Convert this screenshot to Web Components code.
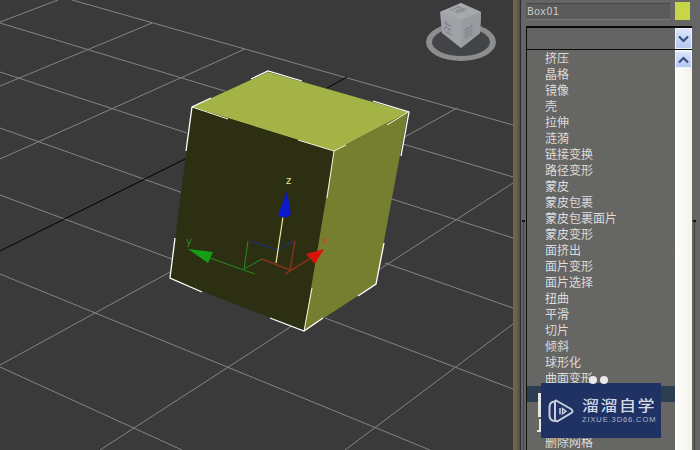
<!DOCTYPE html>
<html lang="zh">
<head>
<meta charset="utf-8">
<title>Box01</title>
<style>
  html, body { margin: 0; height: 100%; background: #3a3a3b; overflow: hidden; }
  body { display: flex; width: 700px; height: 450px; }
</style>
</head>
<body>
<max-viewport></max-viewport>
<command-panel>
  <name-field slot="name" value="Box01" color="#c6d648"></name-field>
  <modifier-list slot="list">
    <mod-item>挤压</mod-item>
    <mod-item>晶格</mod-item>
    <mod-item>镜像</mod-item>
    <mod-item>壳</mod-item>
    <mod-item>拉伸</mod-item>
    <mod-item>涟漪</mod-item>
    <mod-item>链接变换</mod-item>
    <mod-item>路径变形</mod-item>
    <mod-item>蒙皮</mod-item>
    <mod-item>蒙皮包裹</mod-item>
    <mod-item>蒙皮包裹面片</mod-item>
    <mod-item>蒙皮变形</mod-item>
    <mod-item>面挤出</mod-item>
    <mod-item>面片变形</mod-item>
    <mod-item>面片选择</mod-item>
    <mod-item>扭曲</mod-item>
    <mod-item>平滑</mod-item>
    <mod-item>切片</mod-item>
    <mod-item>倾斜</mod-item>
    <mod-item>球形化</mod-item>
    <mod-item>曲面变形</mod-item>
    <mod-item selected></mod-item>
    <mod-item></mod-item>
    <mod-item></mod-item>
    <mod-item>删除网格</mod-item>
  </modifier-list>
</command-panel>
<zixue-badge></zixue-badge>

<script>
// Perspective viewport: grid, box, gizmo and view cube
class MaxViewport extends HTMLElement {
  constructor() {
    super();
    this.attachShadow({ mode: 'open' });
  }

  connectedCallback() {
    // grid lines, measured from the reference
    const grid = [
      [72,0,513,125], [0,23,228,92], [403,144,513,177], [0,72,187,133], [392,199,513,238],
      [0,128,183,193], [385,263,513,308], [0,195,172,259], [325,318,513,389],
      [0,274,430,450], [0,367,182,450],
      [0,22,58,0], [0,86,152,23], [0,159,245,49], [0,365,170,272], [403,138,457,108],
      [100,450,513,183], [345,450,513,324]
    ];
    const gridLines = grid.map(([a, b, c, d]) => `<line x1="${a}" y1="${b}" x2="${c}" y2="${d}"/>`).join('');
    this.shadowRoot.innerHTML = `
      <style>
        :host { display: block; flex: 0 0 513px; height: 450px; background: #3a3a3b; }
        svg { display: block; }
        .grid line { stroke: #848484; stroke-width: 1; }
        .sel { fill: none; stroke: #fff; stroke-width: 1.3; }
        .thin { fill: none; stroke: #f4f6d8; stroke-width: 1; }
        text { font-family: "DejaVu Sans", sans-serif; font-size: 10px; }
        .cube-text { font-family: "Noto Sans CJK SC", sans-serif; font-size: 13px; fill: #7c7e83; }
      </style>
      <svg width="513" height="450" viewBox="0 0 513 450">
        <g class="grid">${gridLines}</g>
        <line x1="0" y1="251" x2="187" y2="158" stroke="#000" stroke-width="1"/>
        <line x1="327" y1="88" x2="347" y2="77" stroke="#000" stroke-width="1"/>

        <!-- box faces -->
        <polygon points="192,107 268,72 408,112 334,151" fill="#a4b346"/>
        <polygon points="192,107 334,151 304,331 170,279" fill="#2d2f13"/>
        <polygon points="334,151 408,112 376,284 304,331" fill="#767f30"/>

        <!-- edges of the front corner -->
        <path class="thin" d="M192,107 L228,119 M298,140 L334,151 L327,198 M312,288 L304,331 M408,112 L387,125 M334,151 L346,145"/>

        <!-- selection brackets -->
        <path class="sel" d="M251,79 L268,71 L302,81"/>
        <path class="sel" d="M211,98 L192,107 L186,151"/>
        <path class="sel" d="M373,101 L409,112 L401,156"/>
        <path class="sel" d="M175,238 L170,278 L202,292"/>
        <path class="sel" d="M270,318 L304,331 L323,318"/>
        <path class="sel" d="M384,243 L376,284 L358,296"/>

        <!-- transform gizmo -->
        <g fill="none" stroke-width="1">
          <path stroke="#2a8a24" d="M210,258 L255,274 M248,241 L244,269 L262,259"/>
          <path stroke="#232f5e" stroke-width="1.6" d="M250,241 L277,250 L295,241"/>
          <path stroke="#84301a" stroke-width="1.5" d="M295,241 L290,270 L262,259 M285,274 L316,255"/>
          <path stroke="#f1ec9a" stroke-width="1.2" d="M276,263 L283,217"/>
        </g>
        <polygon points="287,191 291,215 284,218 278,215" fill="#0b19c8"/>
        <polygon points="188,249 213,252 208,263" fill="#14a014"/>
        <polygon points="324,249 306,254 315,264" fill="#d81408"/>
        <text x="286" y="184" fill="#e8e29a">z</text>
        <text x="186" y="245" fill="#2f8a28">y</text>
        <text x="322" y="244" fill="#c4501a">x</text>

        <!-- view cube -->
        <ellipse cx="461" cy="42" rx="35" ry="19" fill="#8b8d8f"/>
        <ellipse cx="461" cy="42" rx="29" ry="14" fill="#434445"/>
        <polygon points="461,3 481,12 480,33 461,48 442,33 440,12" fill="#a0a2a7"/>
        <polygon points="461,3 481,12 461,20 440,12" fill="#a6a8ad"/>
        <polygon points="461,20 481,12 480,33 461,48" fill="#999ba0"/>
        <text class="cube-text" transform="matrix(.8 .34 -.8 .34 461 8)" x="-6" y="9">顶</text>
        <text class="cube-text" transform="matrix(.7 .4 0 1 443 24)" x="0" y="6">左</text>
        <text class="cube-text" transform="matrix(.7 -.4 0 1 464 33)" x="0" y="6">前</text>
      </svg>
    `;
  }
}

// Name box and colour swatch
class NameField extends HTMLElement {
  constructor() {
    super();
    this.attachShadow({ mode: 'open' });
  }

  connectedCallback() {
    this.shadowRoot.innerHTML = `
      <style>
        :host { display: flex; gap: 5px; padding: 2px 0 0 5px; height: 26px; box-sizing: border-box; }
        .name {
          width: 144px; height: 17px; margin-top: 1px; box-sizing: border-box; padding-left: 1px;
          background: #5a5a5a; border-top: 1px solid #474747; border-bottom: 1px solid #777;
          color: #c8c8c8; font: 10px/15px "DejaVu Sans", sans-serif; letter-spacing: .2px;
        }
        .swatch { width: 15px; height: 18px; background: ${this.getAttribute('color')}; }
      </style>
      <div class="name">${this.getAttribute('value')}</div>
      <div class="swatch"></div>
    `;
  }
}

// Dropdown with its open list and scroll bar
class ModifierList extends HTMLElement {
  constructor() {
    super();
    this.attachShadow({ mode: 'open' });
  }

  connectedCallback() {
    const chevron = (d, color) => `
      <svg width="11" height="8" viewBox="0 0 11 8"><path d="${d}" fill="none" stroke="${color}" stroke-width="2.2"/></svg>`;
    this.shadowRoot.innerHTML = `
      <style>
        :host { display: flex; flex-direction: column; flex: 1; min-height: 0; margin-left: 5px; width: 166px; }
        .combo { display: flex; height: 23px; box-sizing: border-box; background: #646464; border-top: 2px solid #0c0c0c; border-left: 1px solid #0c0c0c; justify-content: flex-end; }
        .btn {
          display: flex; align-items: center; justify-content: center; box-sizing: border-box;
          width: 17px; background: linear-gradient(#dbe5fb, #b6c8f2); border: 1px solid #eef2fc;
        }
        .drop { display: flex; flex: 1; min-height: 0; border-top: 1px solid #0c0c0c; position: relative; }
        .rows { flex: 0 0 149px; box-sizing: border-box; background: #666665; border-left: 1px solid #111; overflow: hidden; }
        .bar { flex: 0 0 17px; background: linear-gradient(90deg, #fff, #f4f2e9); }
        .bar .btn { height: 17px; margin-top: 1px; }
        .stray { position: absolute; background: #e6e6e6; }
      </style>
      <div class="combo"><div class="btn">${chevron('M1,1.5 L5.5,6 L10,1.5', '#3c4f80')}</div></div>
      <div class="drop">
        <div class="rows"><slot></slot></div>
        <div class="bar"><div class="btn">${chevron('M1,6.5 L5.5,2 L10,6.5', '#3c4f80')}</div></div>
        <div class="stray" style="left:12px; top:343px; width:3px; height:24px"></div>
        <div class="stray" style="left:13px; top:369px; width:2px; height:13px"></div>
        <div class="stray" style="left:11px; top:380px; width:3px; height:2px"></div>
      </div>
    `;
  }
}

class ModItem extends HTMLElement {
  constructor() {
    super();
    this.attachShadow({ mode: 'open' });
  }

  connectedCallback() {
    this.shadowRoot.innerHTML = `
      <style>
        :host {
          display: block; height: 16px; padding-left: 18px;
          font: 12px/16px "Noto Sans CJK SC", "Liberation Sans", sans-serif; color: #dcdcdc;
          white-space: nowrap;
        }
        :host([selected]) { background: #2b3d4f; color: #fff; }
      </style>
      <slot></slot>
    `;
  }
}

// Right-hand command panel
class CommandPanel extends HTMLElement {
  constructor() {
    super();
    this.attachShadow({ mode: 'open' });
  }

  connectedCallback() {
    this.shadowRoot.innerHTML = `
      <style>
        :host { display: flex; flex: 0 0 187px; height: 450px; background: #656565; overflow: hidden; position: relative; }
        .edge { flex: 0 0 7px; background: linear-gradient(90deg, #6f664c, #6a624a 55%, #4c4a42); }
        .gutter { flex: 0 0 1px; background: #2c2c2c; }
        .body { flex: 1; display: flex; flex-direction: column; min-width: 0; }
        /* rollout frame that shows behind the open list */
        .frame { position: absolute; top: 220px; bottom: 0; width: 1px; background: #444; }
        .frame::before { content: ""; position: absolute; top: 0; left: -1px; width: 3px; height: 2px; background: #111; }
      </style>
      <div class="edge"></div>
      <div class="gutter"></div>
      <div class="body">
        <slot name="name"></slot>
        <slot name="list"></slot>
      </div>
      <div class="frame" style="left:10px"></div>
      <div class="frame" style="left:181px"></div>
    `;
  }
}

// Watermark that lies over the lower part of the panel
class ZixueBadge extends HTMLElement {
  constructor() {
    super();
    this.attachShadow({ mode: 'open' });
  }

  connectedCallback() {
    this.shadowRoot.innerHTML = `
      <style>
        :host {
          position: absolute; left: 541px; top: 383px; width: 120px; height: 55px;
          display: flex; align-items: center; gap: 8px; box-sizing: border-box; padding: 0 0 0 7px;
          background: #1f3263; color: #d4d9e6;
        }
        .dots { position: absolute; left: 48px; top: -7px; display: flex; gap: 3px; }
        .dots i { width: 8px; height: 8px; border-radius: 50%; background: #e8e8e8; }
        .txt { display: flex; flex-direction: column; gap: 3px; }
        .cn { font: 500 17px/16px "Noto Sans CJK SC", sans-serif; letter-spacing: 1.5px; white-space: nowrap; transform: scaleY(.85); }
        .en { font: 7.5px/8px "Liberation Sans", sans-serif; letter-spacing: .9px; color: #aeb6cc; white-space: nowrap; }
        svg { flex: none; }
      </style>
      <div class="dots"><i></i><i></i></div>
      <svg width="26" height="26" viewBox="0 0 26 26" fill="none" stroke="#c9cfde" stroke-width="2">
        <path d="M7,3.5 C3,3.5 1.5,6 1.5,9 L1.5,17 C1.5,20.5 3.5,23 7,23"/>
        <path d="M8,2.5 L23,11 C25,12.3 25,14 23,15.2 L10,23 C8.5,23.8 7,23 7,21 L7,4.5 C7,3 7.5,2.3 8,2.5 Z"/>
        <path d="M12,10 L12,16.5 M14.5,10.5 L18,13.2 L14.5,15.8 Z" stroke-width="1.5"/>
      </svg>
      <div class="txt">
        <div class="cn">溜溜自学</div>
        <div class="en">ZIXUE.3D66.COM</div>
      </div>
    `;
  }
}

customElements.define('max-viewport', MaxViewport);
customElements.define('name-field', NameField);
customElements.define('mod-item', ModItem);
customElements.define('modifier-list', ModifierList);
customElements.define('command-panel', CommandPanel);
customElements.define('zixue-badge', ZixueBadge);
</script>
</body>
</html>
